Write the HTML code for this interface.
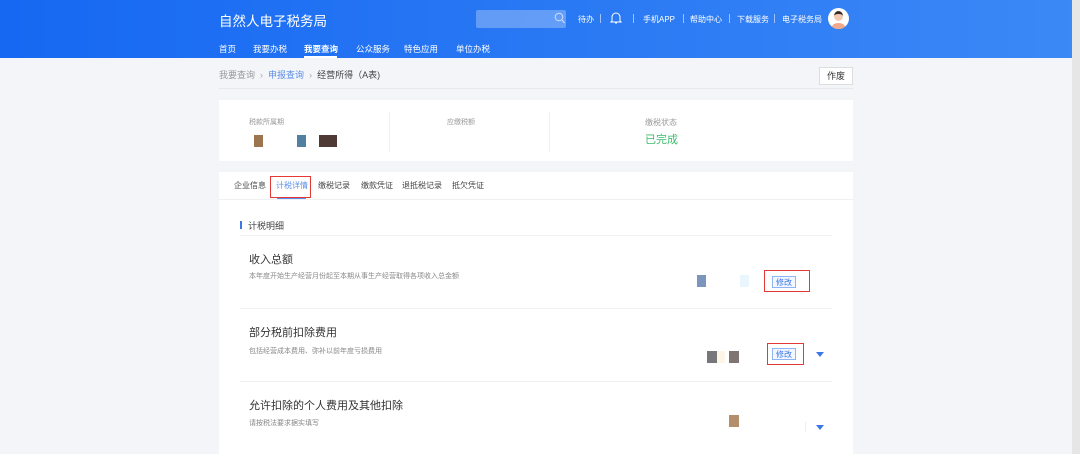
<!DOCTYPE html>
<html><head><meta charset="utf-8"><style>
*{margin:0;padding:0;box-sizing:border-box}
html{overflow:hidden;width:1080px;height:454px}
body{width:1080px;height:454px;overflow:hidden;background:#f4f5f8;font-family:"Liberation Sans","Noto Sans CJK SC",sans-serif;position:relative;color:#333}
.a{position:absolute;white-space:nowrap}
.hdr{position:absolute;left:0;top:0;width:1080px;height:58px;background:linear-gradient(90deg,#1668f2,#3b88f6)}
.w{color:#fff}
.sb{position:absolute;right:0;top:0;width:8px;height:454px;background:#e6e6e6}
.card{position:absolute;background:#fff}
.blk{position:absolute;width:12px;height:12px}
.rb{position:absolute;border:1.5px solid #e53935}
.btn{position:absolute;border:1px solid #8fb4f5;color:#3a78e8;font-size:8px;background:#f3f7ff;text-align:center;line-height:11px}
.tri{position:absolute;width:0;height:0;border-left:4px solid transparent;border-right:4px solid transparent;border-top:5px solid #3a78e8}
.sep{position:absolute;top:14px;width:1px;height:9px;background:#9fc2fb}
.hn{font-size:8px;top:14px}
.nv{font-size:8.5px;top:43px}
</style></head><body>
<div class="hdr"></div>
<div class="a w" style="left:219px;top:10px;font-size:13.5px">自然人电子税务局</div>
<div class="a" style="left:476px;top:10px;width:90px;height:18px;background:rgba(255,255,255,.28);border-radius:2px"></div>
<svg class="a" style="left:554px;top:12px" width="11" height="12"><circle cx="5" cy="5" r="3.8" fill="none" stroke="#cfe0ff" stroke-width="1"/><path d="M8 8l2.5 3" stroke="#cfe0ff"/></svg>
<div class="a w hn" style="left:578px">待办</div>
<div class="sep" style="left:600px"></div>
<svg class="a" style="left:610px;top:11px" width="12" height="14"><path d="M2 10V6a4 4 0 018 0v4l1 1H1z M5 12h2" fill="none" stroke="#fff" stroke-width="1"/></svg>
<div class="sep" style="left:633px"></div>
<div class="a w hn" style="left:643px">手机APP</div>
<div class="sep" style="left:683px"></div>
<div class="a w hn" style="left:690px">帮助中心</div>
<div class="sep" style="left:729px"></div>
<div class="a w hn" style="left:737px">下载服务</div>
<div class="sep" style="left:774px"></div>
<div class="a w hn" style="left:782px">电子税务局</div>
<div class="a" style="left:828px;top:8px;width:21px;height:21px;border-radius:50%;background:#fff;overflow:hidden"><div style="position:absolute;left:6px;top:3px;width:9px;height:10px;border-radius:50%;background:#f2c9b0;border-top:3px solid #3a2a25"></div><div style="position:absolute;left:4px;top:15px;width:13px;height:8px;border-radius:50%;background:#f0a98a"></div></div>
<div class="a w nv" style="left:219px">首页</div>
<div class="a w nv" style="left:253px">我要办税</div>
<div class="a w nv" style="left:304px;font-weight:bold">我要查询</div>
<div class="a" style="left:304px;top:56px;width:33px;height:2px;background:#fff"></div>
<div class="a w nv" style="left:356px">公众服务</div>
<div class="a w nv" style="left:404px">特色应用</div>
<div class="a w nv" style="left:456px">单位办税</div>
<div class="a" style="left:219px;top:68px;font-size:9px;color:#999">我要查询 <span style="color:#aaa">&nbsp;›&nbsp;</span> <span style="color:#5a8ee8">申报查询</span> <span style="color:#aaa">&nbsp;›&nbsp;</span> <span style="color:#444">经营所得（A表)</span></div>
<div class="a" style="left:819px;top:67px;width:34px;height:18px;border:1px solid #ddd;background:#fff;font-size:9px;text-align:center;line-height:16px">作废</div>
<div class="a" style="left:219px;top:88px;width:634px;height:1px;background:#e8e8ec"></div>
<div class="card" style="left:219px;top:100px;width:634px;height:61px"></div>
<div class="a" style="left:249px;top:117px;font-size:7px;color:#999">税款所属期</div>
<div class="blk" style="left:254px;top:135px;background:#9b7550;width:9px"></div>
<div class="blk" style="left:297px;top:135px;background:#54809f;width:9px"></div>
<div class="blk" style="left:319px;top:135px;background:#4f3a35;width:18px"></div>
<div class="a" style="left:389px;top:112px;width:1px;height:40px;background:#f0f0f0"></div>
<div class="a" style="left:447px;top:117px;font-size:7px;color:#999">应缴税额</div>
<div class="a" style="left:549px;top:112px;width:1px;height:40px;background:#f0f0f0"></div>
<div class="a" style="left:645px;top:117px;font-size:8px;color:#999">缴税状态</div>
<div class="a" style="left:645px;top:131px;font-size:11px;color:#3dbb6c">已完成</div>
<div class="card" style="left:219px;top:172px;width:634px;height:290px"></div>
<div class="a" style="left:234px;top:180px;font-size:8px;color:#444">企业信息</div>
<div class="a" style="left:276px;top:180px;font-size:8px;color:#5a8ee8">计税详情</div>
<div class="a" style="left:277px;top:198px;width:29px;height:2px;background:#5a8ee8"></div>
<div class="rb" style="left:270px;top:176px;width:41px;height:22px"></div>
<div class="a" style="left:318px;top:180px;font-size:8px;color:#444">缴税记录</div>
<div class="a" style="left:361px;top:180px;font-size:8px;color:#444">缴款凭证</div>
<div class="a" style="left:402px;top:180px;font-size:8px;color:#444">退抵税记录</div>
<div class="a" style="left:452px;top:180px;font-size:8px;color:#444">抵欠凭证</div>
<div class="a" style="left:219px;top:199px;width:634px;height:1px;background:#f0f0f2"></div>
<div class="a" style="left:240px;top:221px;width:2px;height:8px;background:#3a78e8"></div>
<div class="a" style="left:248px;top:219px;font-size:9px;color:#444">计税明细</div>
<div class="a" style="left:240px;top:235px;width:592px;height:1px;background:#f0f0f2"></div>
<div class="a" style="left:249px;top:251px;font-size:11px;color:#333">收入总额</div>
<div class="a" style="left:249px;top:271px;font-size:7px;color:#888">本年度开始生产经营月份起至本期从事生产经营取得各项收入总金额</div>
<div class="blk" style="left:697px;top:275px;width:9px;background:#7a96bd"></div>
<div class="blk" style="left:740px;top:275px;width:9px;background:#eaf6fe"></div>
<div class="rb" style="left:764px;top:270px;width:46px;height:22px"></div>
<div class="btn" style="left:772px;top:276px;width:24px;height:12px">修改</div>
<div class="a" style="left:240px;top:308px;width:592px;height:1px;background:#f0f0f2"></div>
<div class="a" style="left:249px;top:324px;font-size:11px;color:#333">部分税前扣除费用</div>
<div class="a" style="left:249px;top:346px;font-size:7px;color:#888">包括经营成本费用、弥补以前年度亏损费用</div>
<div class="blk" style="left:707px;top:351px;width:10px;background:#77767b"></div>
<div class="blk" style="left:717px;top:351px;width:8px;background:#fdf5e6"></div>
<div class="blk" style="left:729px;top:351px;width:10px;background:#7f7673"></div>
<div class="rb" style="left:767px;top:343px;width:37px;height:22px"></div>
<div class="btn" style="left:772px;top:348px;width:24px;height:12px">修改</div>
<div class="tri" style="left:816px;top:352px"></div>
<div class="a" style="left:240px;top:381px;width:592px;height:1px;background:#f0f0f2"></div>
<div class="a" style="left:249px;top:397px;font-size:11px;color:#333">允许扣除的个人费用及其他扣除</div>
<div class="a" style="left:249px;top:418px;font-size:7px;color:#888">请按税法要求据实填写</div>
<div class="blk" style="left:729px;top:415px;width:10px;background:#b48e6b"></div>
<div class="a" style="left:805px;top:422px;width:1px;height:10px;background:#eee"></div>
<div class="tri" style="left:816px;top:425px"></div>
<div class="sb"></div>
</body></html>
